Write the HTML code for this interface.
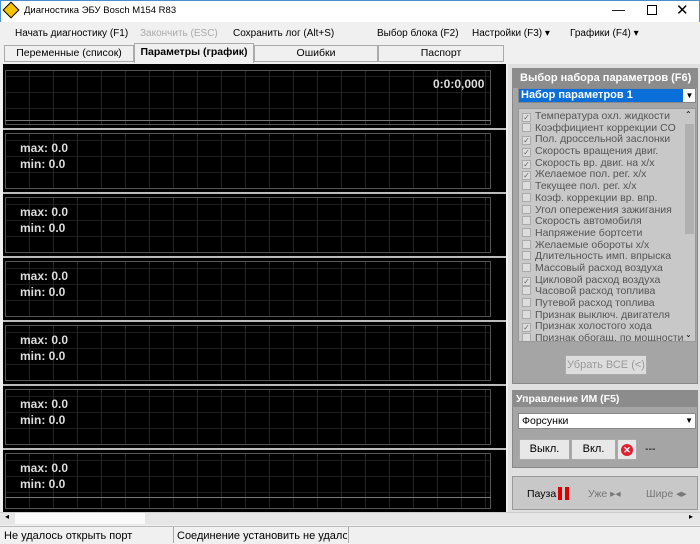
<!DOCTYPE html><html><head><meta charset="utf-8"><style>
*{box-sizing:border-box;margin:0;padding:0}
body{width:700px;height:544px;overflow:hidden;background:#f0f0f0;font-family:"Liberation Sans",sans-serif;font-size:10.5px;position:relative;color:#000}
.a{position:absolute}
.grid{background-color:#000;background-image:repeating-linear-gradient(90deg,transparent 0 23px,#262626 23px 24px),repeating-linear-gradient(0deg,transparent 0 15px,#1e1e1e 15px 16px);border:1px solid #555}
.mm{color:#ddd;font-weight:bold;font-size:12px;line-height:16px}
.li{height:11.7px;line-height:11.7px;font-size:10.5px;color:#555;white-space:nowrap}
.li i{display:inline-block;width:9px;height:9px;border:1px solid #aaa;background:#ddd;margin:0 4px 0 3px;vertical-align:-1px;font-style:normal;font-size:8px;line-height:7px;color:#666;text-align:center}
.btn{position:absolute;background:#e8e8e8;border:1px solid #aaa;text-align:center;font-size:11px}
</style></head><body>
<div class="a" style="left:0;top:0;width:700px;height:22px;background:#fff;border:1px solid #4a8fd0;border-bottom:none"></div>
<div class="a" style="left:5px;top:4px;width:12px;height:12px;background:#f5c400;transform:rotate(45deg);border:1px solid #000"></div>
<div class="a" style="left:24px;top:5px;font-size:9.5px">Диагностика ЭБУ Bosch M154 R83</div>
<div class="a" style="left:612px;top:2px;font-size:13px">—</div>
<div class="a" style="left:647px;top:5px;width:10px;height:10px;border:1px solid #000"></div>
<div class="a" style="left:676px;top:1px;font-size:15px">✕</div>
<div class="a" style="top:28px;left:15px;font-size:10px">Начать диагностику (F1)</div>
<div class="a" style="top:28px;left:140px;color:#aaa;font-size:10px">Закончить (ESC)</div>
<div class="a" style="top:28px;left:233px;font-size:10px">Сохранить лог (Alt+S)</div>
<div class="a" style="top:28px;left:377px;font-size:10px">Выбор блока (F2)</div>
<div class="a" style="top:28px;left:472px;font-size:10px">Настройки (F3) ▾</div>
<div class="a" style="top:28px;left:570px;font-size:10px">Графики (F4) ▾</div>
<div class="a" style="top:44px;left:4px;width:500px;height:18px;border-bottom:1px solid #aaa"></div>
<div class="a" style="top:45px;left:4px;width:130px;height:17px;border:1px solid #aaa;background:#f0f0f0;text-align:center;line-height:15px">Переменные (список)</div>
<div class="a" style="top:43px;left:134px;width:120px;height:20px;border:1px solid #aaa;border-bottom:none;background:#f0f0f0;text-align:center;line-height:16px;font-weight:bold">Параметры (график)</div>
<div class="a" style="top:45px;left:254px;width:124px;height:17px;border:1px solid #aaa;text-align:center;line-height:15px">Ошибки</div>
<div class="a" style="top:45px;left:378px;width:126px;height:17px;border:1px solid #aaa;text-align:center;line-height:15px">Паспорт</div>
<div class="a" style="left:3px;top:64px;width:503px;height:448px;background:#000"></div>
<div class="a grid" style="left:5px;top:70px;width:486px;height:55px"></div>
<div class="a" style="left:5px;top:120px;width:486px;height:1px;background:#777"></div>
<div class="a mm" style="left:433px;top:76px">0:0:0,000</div>
<div class="a" style="left:3px;top:128px;width:503px;height:2px;background:#bbb"></div>
<div class="a" style="left:3px;top:192px;width:503px;height:2px;background:#bbb"></div>
<div class="a" style="left:3px;top:256px;width:503px;height:2px;background:#bbb"></div>
<div class="a" style="left:3px;top:320px;width:503px;height:2px;background:#bbb"></div>
<div class="a" style="left:3px;top:384px;width:503px;height:2px;background:#bbb"></div>
<div class="a" style="left:3px;top:448px;width:503px;height:2px;background:#bbb"></div>
<div class="a grid" style="left:5px;top:133px;width:486px;height:56px"></div><div class="a mm" style="left:20px;top:140px">max: 0.0<br>min: 0.0</div>
<div class="a grid" style="left:5px;top:197px;width:486px;height:56px"></div><div class="a mm" style="left:20px;top:204px">max: 0.0<br>min: 0.0</div>
<div class="a grid" style="left:5px;top:261px;width:486px;height:56px"></div><div class="a mm" style="left:20px;top:268px">max: 0.0<br>min: 0.0</div>
<div class="a grid" style="left:5px;top:325px;width:486px;height:56px"></div><div class="a mm" style="left:20px;top:332px">max: 0.0<br>min: 0.0</div>
<div class="a grid" style="left:5px;top:389px;width:486px;height:56px"></div><div class="a mm" style="left:20px;top:396px">max: 0.0<br>min: 0.0</div>
<div class="a grid" style="left:5px;top:453px;width:486px;height:56px"></div><div class="a mm" style="left:20px;top:460px">max: 0.0<br>min: 0.0</div>
<div class="a" style="left:5px;top:497px;width:486px;height:1px;background:#777"></div>
<!-- right panel -->
<div class="a" style="left:508px;top:64px;width:192px;height:448px;background:#e0e0e0"></div>
<div class="a" style="left:512px;top:68px;width:186px;height:316px;background:#a5a5a5;border:1px solid #888"></div>
<div class="a" style="left:512px;top:68px;width:186px;height:20px;background:#8c8c8c"></div>
<div class="a" style="left:520px;top:72px;color:#fff;font-weight:bold;font-size:11px">Выбор набора параметров (F6)</div>
<div class="a" style="left:518px;top:88px;width:178px;height:15px;background:#fff;border:1px solid #888"></div>
<div class="a" style="left:519px;top:89px;width:164px;height:13px;background:#0a6fd8;color:#fff;font-weight:bold;font-size:11px;line-height:13px;padding-left:2px">Набор параметров 1</div>
<div class="a" style="left:684px;top:89px;width:11px;height:13px;font-size:8px;text-align:center;line-height:13px">▼</div>
<div class="a" style="left:518px;top:108px;width:178px;height:234px;background:#c8c8c8;border:1px solid #999;overflow:hidden;padding-top:2px">
<div class="li"><i>✓</i>Температура охл. жидкости</div>
<div class="li"><i></i>Коэффициент коррекции CO</div>
<div class="li"><i>✓</i>Пол. дроссельной заслонки</div>
<div class="li"><i>✓</i>Скорость вращения двиг.</div>
<div class="li"><i>✓</i>Скорость вр. двиг. на х/х</div>
<div class="li"><i>✓</i>Желаемое пол. рег. х/х</div>
<div class="li"><i></i>Текущее пол. рег. х/х</div>
<div class="li"><i></i>Коэф. коррекции вр. впр.</div>
<div class="li"><i></i>Угол опережения зажигания</div>
<div class="li"><i></i>Скорость автомобиля</div>
<div class="li"><i></i>Напряжение бортсети</div>
<div class="li"><i></i>Желаемые обороты х/х</div>
<div class="li"><i></i>Длительность имп. впрыска</div>
<div class="li"><i></i>Массовый расход воздуха</div>
<div class="li"><i>✓</i>Цикловой расход воздуха</div>
<div class="li"><i></i>Часовой расход топлива</div>
<div class="li"><i></i>Путевой расход топлива</div>
<div class="li"><i></i>Признак выключ. двигателя</div>
<div class="li"><i>✓</i>Признак холостого хода</div>
<div class="li"><i></i>Признак обогащ. по мощности</div>
</div>
<div class="a" style="left:684px;top:109px;width:11px;height:232px;background:#c8c8c8"></div>
<div class="a" style="left:685px;top:124px;width:9px;height:110px;background:#b0b0b0"></div>
<div class="a" style="left:685px;top:110px;font-size:8px">⌃</div>
<div class="a" style="left:685px;top:330px;font-size:8px">⌄</div>
<div class="btn" style="left:565px;top:355px;width:82px;height:20px;color:#999;line-height:18px;background:#ddd">Убрать ВСЕ (&lt;)</div>
<div class="a" style="left:512px;top:390px;width:186px;height:78px;background:#a5a5a5;border:1px solid #888"></div>
<div class="a" style="left:512px;top:390px;width:186px;height:17px;background:#8c8c8c"></div>
<div class="a" style="left:516px;top:393px;color:#fff;font-weight:bold">Управление ИМ (F5)</div>
<div class="a" style="left:518px;top:413px;width:178px;height:16px;background:#fff;border:1px solid #888;padding-left:3px;line-height:14px">Форсунки<span style="position:absolute;right:2px;font-size:8px">▼</span></div>
<div class="btn" style="left:519px;top:439px;width:51px;height:21px;line-height:19px">Выкл.</div>
<div class="btn" style="left:571px;top:439px;width:45px;height:21px;line-height:19px">Вкл.</div>
<div class="btn" style="left:617px;top:439px;width:20px;height:21px"><div style="width:12px;height:12px;border-radius:50%;background:#e02030;color:#fff;font-size:9px;line-height:12px;margin:4px auto;font-weight:bold">✕</div></div>
<div class="a" style="left:645px;top:443px">---</div>
<div class="a" style="left:512px;top:476px;width:186px;height:34px;background:#c8c8c8;border:1px solid #999"></div>
<div class="a" style="left:527px;top:488px">Пауза</div>
<div class="a" style="left:558px;top:487px;width:4px;height:13px;background:#d00"></div>
<div class="a" style="left:565px;top:487px;width:4px;height:13px;background:#d00"></div>
<div class="a" style="left:588px;top:488px;color:#777">Уже ▸◂</div>
<div class="a" style="left:646px;top:488px;color:#777">Шире ◂▸</div>
<!-- scrollbar -->
<div class="a" style="left:0;top:512px;width:700px;height:13px;background:#e6e6e6;border-top:1px solid #ccc"></div>
<div class="a" style="left:15px;top:513px;width:130px;height:11px;background:#fafafa"></div>
<div class="a" style="left:5px;top:512px;font-size:8px">◂</div>
<div class="a" style="left:689px;top:512px;font-size:8px">▸</div>
<div class="a" style="left:0;top:526px;width:700px;height:18px;background:#f0f0f0;border-top:1px solid #bbb"></div>
<div class="a" style="left:173px;top:527px;width:1px;height:16px;background:#aaa"></div>
<div class="a" style="left:348px;top:527px;width:1px;height:16px;background:#aaa"></div>
<div class="a" style="left:4px;top:530px;font-size:11px">Не удалось открыть порт</div>
<div class="a" style="left:177px;top:530px;font-size:11px;width:170px;overflow:hidden;white-space:nowrap">Соединение установить не удалось</div>
</body></html>
